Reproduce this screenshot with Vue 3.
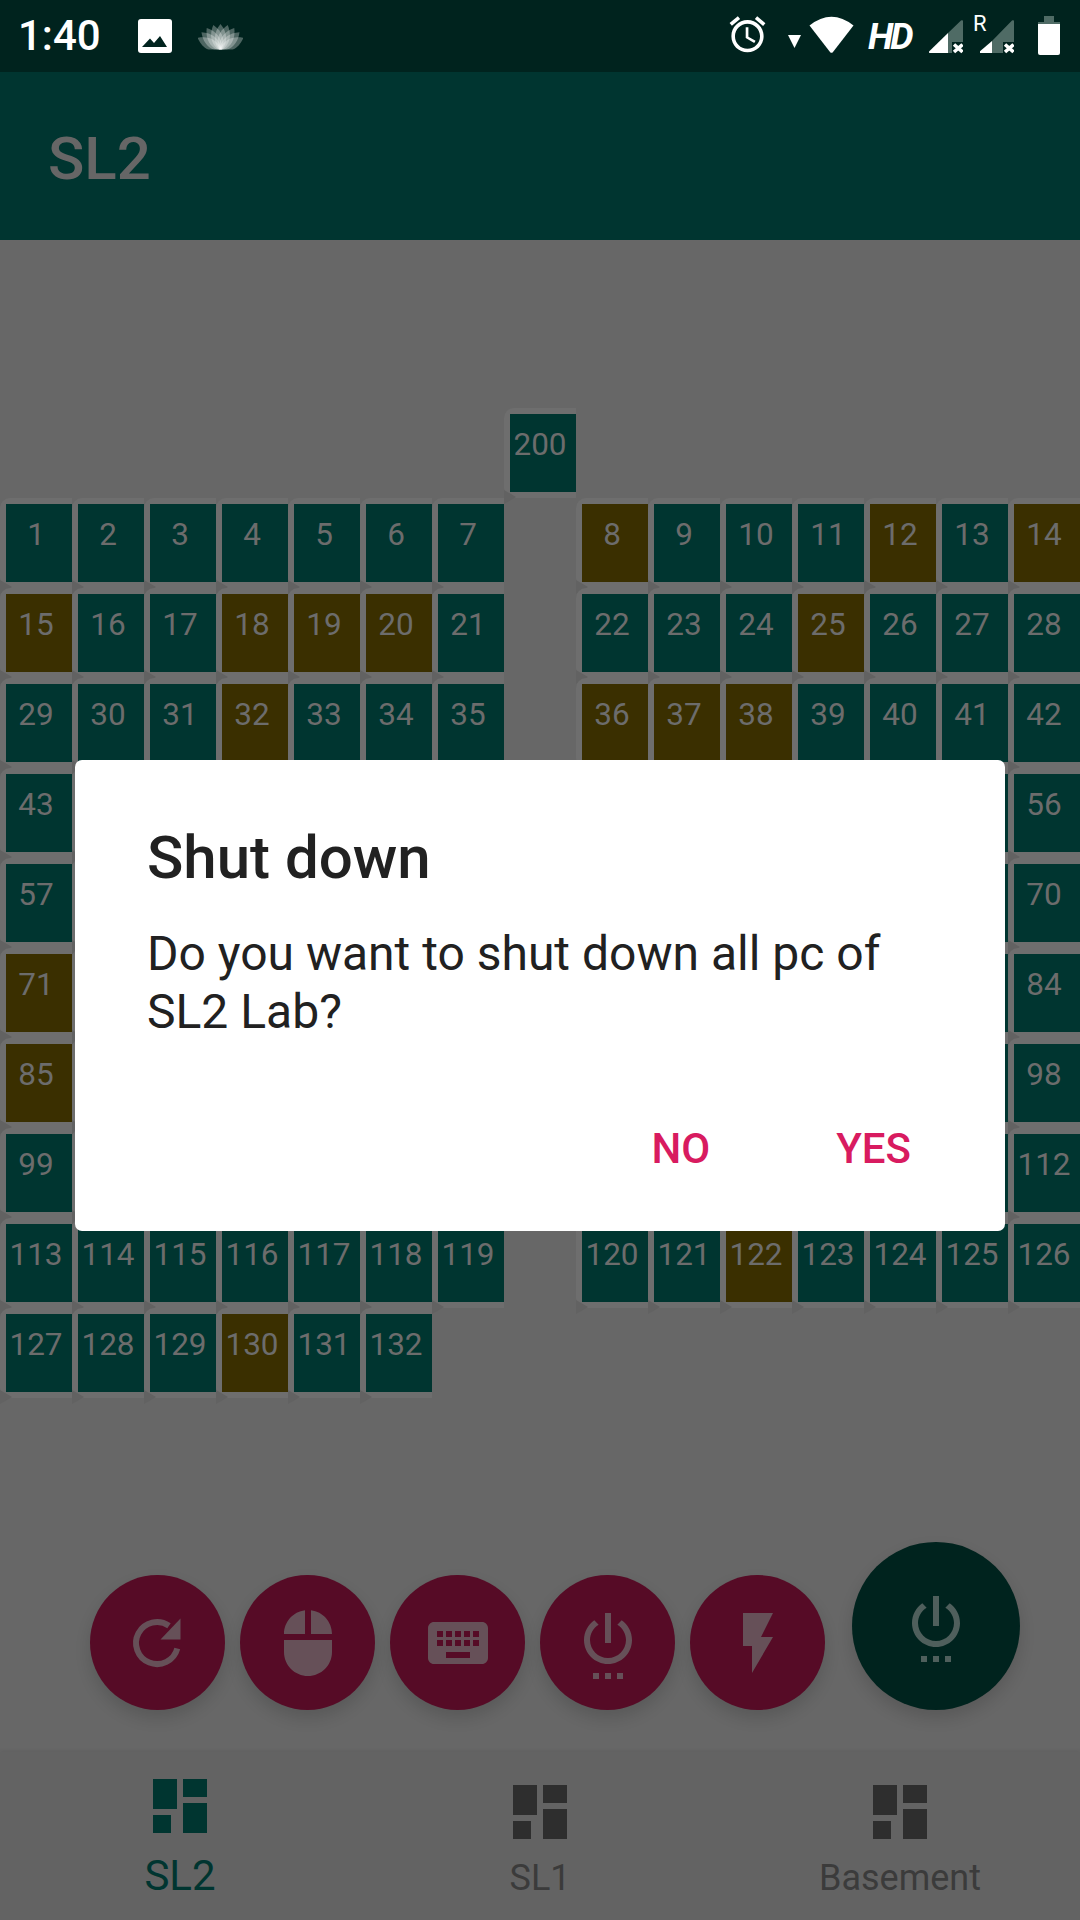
<script setup>
const olive = [8, 12, 14, 15, 18, 19, 20, 25, 32, 36, 37, 38, 71, 85, 122, 130]

// Rows 5-9, columns 2-14 sit entirely behind the dialog: no label is visible there.
const behindDialog = (row, col) => row >= 5 && row <= 9 && col >= 2 && col <= 14

const cells = [{ n: 200, row: 1, col: 8, label: '200' }]
for (let i = 1; i <= 132; i++) {
  const c = (i - 1) % 14
  const row = Math.floor((i - 1) / 14) + 2
  const col = c < 7 ? c + 1 : c + 2
  cells.push({ n: i, row, col, label: behindDialog(row, col) ? '' : String(i) })
}

const icons = {
  mouse: 'M13 1.07V9h7c0-4.08-3.05-7.44-7-7.93zM4 15c0 4.42 3.58 8 8 8s8-3.58 8-8v-4H4v4zm7-13.93C7.05 1.56 4 4.92 4 9h7V1.07z',
  keyboard: 'M20 5H4c-1.1 0-1.99.9-1.99 2L2 17c0 1.1.9 2 2 2h16c1.1 0 2-.9 2-2V7c0-1.1-.9-2-2-2zm-9 3h2v2h-2V8zm0 3h2v2h-2v-2zM8 8h2v2H8V8zm0 3h2v2H8v-2zm-1 2H5v-2h2v2zm0-3H5V8h2v2zm9 7H8v-2h8v2zm0-4h-2v-2h2v2zm0-3h-2V8h2v2zm3 3h-2v-2h2v2zm0-3h-2V8h2v2z',
  power: 'M7 24h2v-2H7v2zm4 0h2v-2h-2v2zm2-22h-2v10h2V2zm3.56 2.44l-1.45 1.45C16.84 6.94 18 8.83 18 11c0 3.31-2.69 6-6 6s-6-2.69-6-6c0-2.17 1.16-4.06 2.88-5.12L7.44 4.44C5.36 5.88 4 8.28 4 11c0 4.42 3.58 8 8 8s8-3.58 8-8c0-2.72-1.36-5.12-3.44-6.56zM15 24h2v-2h-2v2z',
  flash: 'M7 2v11h3v9l7-12h-4l4-8z',
  dashboard: 'M3 13h8V3H3v10zm0 8h6v-6H3v6zm10 0h8V11h-8v10zm0-18v6h8V3h-8z'
}
const tabs = [
  { label: 'SL2', active: true },
  { label: 'SL1', active: false },
  { label: 'Basement', active: false }
]
const petals = [-62, -47, -32, -16, 0, 16, 32, 47, 62]
</script>

<template>
  <div class="screen">
    <header class="status">
      <span class="time">1:40</span>
      <svg class="ic-image" width="34" height="72" viewBox="138 0 34 72">
        <rect x="138" y="19" width="34" height="34" rx="3" fill="#fff" />
        <path d="M142 47l8-8.5 4 4.5 6-7 7 11z" fill="#00231e" />
      </svg>
      <svg class="ic-lotus" width="45" height="72" viewBox="198 0 45 72">
        <defs>
          <clipPath id="lotus-clip"><rect x="198" y="20" width="45" height="29.500" /></clipPath>
        </defs>
        <g clip-path="url(#lotus-clip)">
          <path
            v-for="a in petals"
            :key="a"
            d="M220.500 52C212 42 214 32 220.500 24C227 32 229 42 220.500 52z"
            fill="#fff"
            fill-opacity="0.3"
            :transform="`rotate(${a} 220.500 50)`"
          />
        </g>
      </svg>
      <div class="status-right">
        <svg class="ic-alarm" width="43" height="72" viewBox="0 0 24 40.2">
          <g transform="translate(0 7.2)">
            <path d="M22 5.72l-4.6-3.86-1.29 1.53 4.6 3.86L22 5.72zM7.88 3.39L6.6 1.86 2 5.71l1.29 1.53 4.59-3.85zM12.5 8H11v6l4.75 2.85.75-1.23-4-2.37V8zM12 4c-4.97 0-9 4.03-9 9s4.03 9 9 9 9-4.03 9-9-4.03-9-9-9zm0 16c-3.87 0-7-3.13-7-7s3.13-7 7-7 7 3.13 7 7-3.13 7-7 7z" fill="#fff" />
          </g>
        </svg>
        <svg class="ic-tri" width="13" height="72" viewBox="788 0 13 72">
          <path d="M788 35h13l-6.5 13z" fill="#fff" />
        </svg>
        <svg class="ic-wifi" width="45" height="72" viewBox="809 0 45 72">
          <path d="M809.5 25.5Q831.5 8 853.5 25.5L833 52a2 2 0 0 1-3 0z" fill="#fff" />
        </svg>
        <span class="hd">HD</span>
        <svg class="ic-sig1" width="34" height="72" viewBox="929 0 34 72">
          <path d="M948 33L961 20.5a1.2 1.2 0 0 1 2 1V42h-11v11h-4z" fill="#4f6b65" />
          <path d="M948 33v20h-18a1 1 0 0 1-.7-1.7z" fill="#fff" />
          <path d="M954 44.500l8.500 7.500m0-7.500l-8.500 7.500" stroke="#fff" stroke-width="3.500" />
        </svg>
        <span class="sig2">
          <span class="roam">R</span>
          <svg width="34" height="72" viewBox="980 0 34 72">
            <path d="M992 41L1012 20.500a1.2 1.2 0 0 1 2 1V42h-11v11h-11z" fill="#4f6b65" />
            <path d="M992 41V53h-11.500a1 1 0 0 1-.7-1.700z" fill="#fff" />
            <path d="M1005 44.500l8.500 7.500m0-7.500l-8.500 7.500" stroke="#fff" stroke-width="3.500" />
          </svg>
        </span>
        <svg class="ic-batt" width="22" height="72" viewBox="1038 0 22 72">
          <path d="M1044 16h10v6h6v2h-22v-2h6z" fill="#4f6b65" />
          <path d="M1038 24h22v29a2 2 0 0 1-2 2h-18a2 2 0 0 1-2-2z" fill="#fff" />
        </svg>
      </div>
    </header>

    <div class="appbar">SL2</div>

    <main class="content">
      <div class="grid">
        <div
          v-for="c in cells"
          :key="c.n"
          class="cell"
          :style="{ gridRow: c.row, gridColumn: c.col }"
        >
          <div class="pc" :class="{ olive: olive.includes(c.n) }">{{ c.label }}</div>
        </div>
      </div>

      <div class="fabs">
        <button class="fab">
          <svg width="72" height="72" viewBox="0 0 72 72">
            <path d="M55.300 41.500A21 21 0 1 1 47 18.800" fill="none" stroke="#665058" stroke-width="6" />
            <path d="M58.500 11.500v21h-20z" fill="#665058" />
          </svg>
        </button>
        <button class="fab">
          <svg width="72" height="72" viewBox="0 0 24 24"><path :d="icons.mouse" fill="#665058" /></svg>
        </button>
        <button class="fab">
          <svg width="72" height="72" viewBox="0 0 24 24"><path :d="icons.keyboard" fill="#665058" /></svg>
        </button>
        <button class="fab">
          <svg width="72" height="72" viewBox="0 0 24 24"><path :d="icons.power" fill="#665058" /></svg>
        </button>
        <button class="fab">
          <svg width="72" height="72" viewBox="0 0 24 24"><path :d="icons.flash" fill="#665058" /></svg>
        </button>
        <button class="fab big">
          <svg width="72" height="72" viewBox="0 0 24 24"><path :d="icons.power" fill="#4f5f5c" /></svg>
        </button>
      </div>
    </main>

    <nav class="nav">
      <div v-for="t in tabs" :key="t.label" class="tab" :class="{ active: t.active }">
        <svg width="72" height="72" viewBox="0 0 24 24"><path :d="icons.dashboard" fill="currentColor" /></svg>
        <span class="tab-label">{{ t.label }}</span>
      </div>
    </nav>

    <div class="dialog">
      <h2 class="dialog-title">Shut down</h2>
      <p class="dialog-msg">Do you want to shut down all pc of SL2 Lab?</p>
      <div class="dialog-actions">
        <span class="action no">NO</span>
        <span class="action yes">YES</span>
      </div>
    </div>
  </div>
</template>

<style>
html, body { margin: 0; padding: 0; background: #676767; }
</style>

<style scoped>
.screen {
  position: relative;
  width: 1080px;
  height: 1920px;
  display: flex;
  flex-direction: column;
  overflow: hidden;
  background: #676767;
  font-family: Roboto, "Liberation Sans", sans-serif;
}
svg { display: block; flex: none; }

.status {
  height: 72px;
  flex: none;
  display: flex;
  background: #00231e;
  color: #fff;
}
.time {
  margin-left: 18px;
  width: 86px;
  font-size: 42px;
  line-height: 72px;
  font-weight: 500;
}
.ic-image { margin-left: 34px; }
.ic-lotus { margin-left: 26px; }
.status-right {
  margin-left: auto;
  width: 354px;
  display: flex;
}
.ic-tri { margin-left: 19px; }
.ic-wifi { margin-left: 8px; }
.hd {
  margin-left: 14px;
  width: 43px;
  font-size: 37px;
  line-height: 73px;
  font-weight: 700;
  font-style: italic;
  letter-spacing: -3px;
  white-space: nowrap;
}
.ic-sig1 { margin-left: 18px; }
.sig2 { position: relative; margin-left: 17px; display: block; }
.roam {
  position: absolute;
  left: -7px;
  top: 11px;
  font-size: 22px;
  line-height: 26px;
}
.ic-batt { margin-left: 24px; }

.appbar {
  height: 168px;
  flex: none;
  box-sizing: border-box;
  padding-left: 48px;
  background: #003530;
  color: #666;
  font-size: 60px;
  font-weight: 500;
  line-height: 174px;
}

.content {
  flex: 1;
  display: flex;
  flex-direction: column;
  padding-top: 168px;
  padding-bottom: 42px;
  box-sizing: border-box;
  min-height: 0;
}
.grid {
  display: grid;
  grid-template-columns: repeat(15, 72px);
  grid-auto-rows: 90px;
}
.cell {
  position: relative;
  box-sizing: border-box;
  padding: 6px 0 6px 6px;
  background: #6e6e6e;
  border-radius: 10px 0 0 10px;
}
.cell::after {
  content: "";
  position: absolute;
  left: 0;
  bottom: -6px;
  width: 12px;
  height: 14px;
  background: #626262;
  clip-path: polygon(0 0, 100% 50%, 0 100%);
}
.pc {
  height: 78px;
  box-sizing: border-box;
  padding-right: 6px;
  background: #003530;
  color: #6c6c6c;
  font-size: 31.500px;
  line-height: 62px;
  text-align: center;
}
.pc.olive { background: #3a2f00; }

.fabs {
  margin-top: auto;
  display: flex;
  align-items: flex-end;
  gap: 15px;
  padding-left: 90px;
}
.fab {
  width: 135px;
  height: 135px;
  padding: 0;
  border: 0;
  border-radius: 50%;
  background: #560b26;
  display: flex;
  align-items: center;
  justify-content: center;
  box-shadow: 0 8px 16px rgba(0, 0, 0, 0.14);
}
.fab.big {
  width: 168px;
  height: 168px;
  margin-left: 12px;
  background: #00231e;
}

.nav {
  height: 168px;
  flex: none;
  display: flex;
  background: #636363;
  box-shadow: 0 -2px 3px rgba(0, 0, 0, 0.05);
}
.tab {
  flex: 1;
  display: flex;
  flex-direction: column;
  align-items: center;
  padding-top: 24px;
  color: #2e2e2e;
}
.tab-label {
  margin-top: 6px;
  font-size: 36px;
  line-height: 48px;
  color: #3b3b3b;
}
.tab.active { padding-top: 18px; color: #003530; }
.tab.active .tab-label { margin-top: 10px; font-size: 42px; color: #003530; }

.dialog {
  position: absolute;
  left: 75px;
  top: 760px;
  width: 930px;
  height: 471px;
  box-sizing: border-box;
  padding: 62px 72px 0;
  background: #fff;
  border-radius: 7px;
  color: #212121;
}
.dialog-title {
  margin: 0;
  font-size: 60px;
  font-weight: 500;
  line-height: 72px;
}
.dialog-msg {
  margin: 31px 0 0;
  font-size: 48px;
  line-height: 58px;
}
.dialog-actions {
  position: absolute;
  right: 94px;
  top: 364px;
  display: flex;
  gap: 126px;
}
.action {
  color: #d81b60;
  font-size: 42px;
  font-weight: 500;
  line-height: 50px;
}
</style>
